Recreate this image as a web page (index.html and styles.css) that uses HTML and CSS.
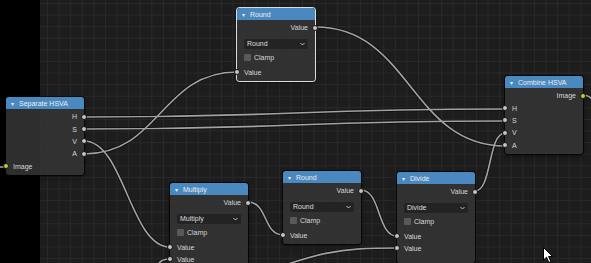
FILE: index.html
```html
<!DOCTYPE html>
<html lang="en">

<head>
    <meta charset="UTF-8">
    <meta name="viewport" content="width=device-width, initial-scale=1.0">
    <title>Node Editor</title>
    <link rel="stylesheet" href="styles.css">
</head>

<body>
    <main class="editor">
        <div class="strip"></div>
        <div class="grid"></div>

        <!-- links between sockets -->
        <svg class="wires" width="591" height="263" viewBox="0 0 591 263">
            <g class="shade">
                <path d="M84 117 C294 117 295 109 505 109" />
                <path d="M84 129 C294 129 295 121 505 121" />
                <path d="M84 141 C124 141 130 247 170 247" />
                <path d="M84 154 C160 154 161 72 237 72" />
                <path d="M316 27 C410 27 411 146 505 146" />
                <path d="M248 202 C268 202 263 235 283 235" />
                <path d="M361 190 C381 190 377 236 397 236" />
                <path d="M475 191 C492 191 488 133 505 133" />
                <path d="M230 285 C320 250 340 248 397 248" />
                <path d="M150 275 C160 262 160 259 170 259" />
                <path d="M0 167 L6 167" />
                <path d="M583 95 C596 95 596 112 600 118" />
            </g>
            <g class="wire">
                <path d="M84 117 C294 117 295 109 505 109" />
                <path d="M84 129 C294 129 295 121 505 121" />
                <path d="M84 141 C124 141 130 247 170 247" />
                <path d="M84 154 C160 154 161 72 237 72" />
                <path d="M316 27 C410 27 411 146 505 146" />
                <path d="M248 202 C268 202 263 235 283 235" />
                <path d="M361 190 C381 190 377 236 397 236" />
                <path d="M475 191 C492 191 488 133 505 133" />
                <path d="M230 285 C320 250 340 248 397 248" />
                <path d="M150 275 C160 262 160 259 170 259" />
                <path d="M0 167 L6 167" />
                <path d="M583 95 C596 95 596 112 600 118" />
            </g>
        </svg>

        <div class="node n-sep">
            <div class="head"><span class="tri">&#9662;</span>Separate HSVA</div>
            <div class="body">
                <div class="row out">H<i class="sock"></i></div>
                <div class="row out">S<i class="sock"></i></div>
                <div class="row out">V<i class="sock"></i></div>
                <div class="row out">A<i class="sock"></i></div>
                <div class="row in"><i class="sock yellow"></i>Image</div>
            </div>
        </div>

        <div class="node n-round selected">
            <div class="head"><span class="tri">&#9662;</span>Round</div>
            <div class="body">
                <div class="row out">Value<i class="sock"></i></div>
                <div class="opts">
                    <div class="select"><span>Round</span>
                        <svg class="chev" width="5" height="4" viewBox="0 0 5 4"><polyline points="0.5,1 2.5,3 4.5,1" /></svg>
                    </div>
                    <div class="check"><i class="box"></i>Clamp</div>
                </div>
                <div class="row in"><i class="sock"></i>Value</div>
            </div>
        </div>

        <div class="node n-comb">
            <div class="head"><span class="tri">&#9662;</span>Combine HSVA</div>
            <div class="body">
                <div class="row out">Image<i class="sock yellow"></i></div>
                <div class="row in"><i class="sock"></i>H</div>
                <div class="row in"><i class="sock"></i>S</div>
                <div class="row in"><i class="sock"></i>V</div>
                <div class="row in"><i class="sock"></i>A</div>
            </div>
        </div>

        <div class="node n-mult">
            <div class="head"><span class="tri">&#9662;</span>Multiply</div>
            <div class="body">
                <div class="row out">Value<i class="sock"></i></div>
                <div class="opts">
                    <div class="select"><span>Multiply</span>
                        <svg class="chev" width="5" height="4" viewBox="0 0 5 4"><polyline points="0.5,1 2.5,3 4.5,1" /></svg>
                    </div>
                    <div class="check"><i class="box"></i>Clamp</div>
                </div>
                <div class="row in"><i class="sock"></i>Value</div>
                <div class="row in"><i class="sock"></i>Value</div>
            </div>
        </div>

        <div class="node n-round2">
            <div class="head"><span class="tri">&#9662;</span>Round</div>
            <div class="body">
                <div class="row out">Value<i class="sock"></i></div>
                <div class="opts">
                    <div class="select"><span>Round</span>
                        <svg class="chev" width="5" height="4" viewBox="0 0 5 4"><polyline points="0.5,1 2.5,3 4.5,1" /></svg>
                    </div>
                    <div class="check"><i class="box"></i>Clamp</div>
                </div>
                <div class="row in"><i class="sock"></i>Value</div>
            </div>
        </div>

        <div class="node n-div">
            <div class="head"><span class="tri">&#9662;</span>Divide</div>
            <div class="body">
                <div class="row out">Value<i class="sock"></i></div>
                <div class="opts">
                    <div class="select"><span>Divide</span>
                        <svg class="chev" width="5" height="4" viewBox="0 0 5 4"><polyline points="0.5,1 2.5,3 4.5,1" /></svg>
                    </div>
                    <div class="check"><i class="box"></i>Clamp</div>
                </div>
                <div class="row in"><i class="sock"></i>Value</div>
                <div class="row in"><i class="sock"></i>Value</div>
            </div>
        </div>

        <svg class="cursor" width="11" height="17" viewBox="0 0 11 17">
            <polygon points="0.5,0.5 0.5,13 3.5,10.2 5.8,15.5 7.8,14.6 5.6,9.5 9.5,9.5" />
        </svg>
    </main>
</body>

</html>
```

FILE: styles.css
```css
html,
body {
    margin: 0;
    padding: 0;
    background: #000;
}

.editor {
    position: relative;
    width: 591px;
    height: 263px;
    display: flex;
    overflow: hidden;
    font-family: "Liberation Sans", Arial, sans-serif;
    font-size: 7px;
    color: #d6d6d6;
}

.strip {
    width: 40px;
    background: #000;
}

.grid {
    flex: 1;
    background-color: #1d1d1d;
    background-image:
        linear-gradient(to right, #292929 1px, transparent 1px),
        linear-gradient(to bottom, #292929 1px, transparent 1px);
    background-size: 11.6px 11.6px;
    background-position: 7px 3px;
}

.wires {
    position: absolute;
    left: 0;
    top: 0;
}

.wires path {
    fill: none;
}

.shade path {
    stroke: rgba(0, 0, 0, 0.55);
    stroke-width: 3.2;
}

.wire path {
    stroke: #a3a3a3;
    stroke-width: 1.6;
}

/* nodes */
.node {
    position: absolute;
    width: 78px;
    border-radius: 3px;
    background: rgba(52, 52, 52, 0.88);
    box-shadow: 0 0 0 1px rgba(0, 0, 0, 0.7), 0 2px 5px rgba(0, 0, 0, 0.55);
}

.node.selected {
    box-shadow: 0 0 0 1px #dcdcdc, 0 2px 5px rgba(0, 0, 0, 0.55);
}

.head {
    height: 12px;
    display: flex;
    align-items: center;
    padding-left: 5px;
    background: #4a89c0;
    border-radius: 3px 3px 0 0;
    color: #ececec;
}

.tri {
    font-size: 6px;
    width: 8px;
}

.body {
    padding: 1.5px 0 3px;
}

.row {
    position: relative;
    height: 12.4px;
    display: flex;
    align-items: center;
}

.row.out {
    justify-content: flex-end;
    padding-right: 7px;
}

.row.in {
    padding-left: 7px;
}

.sock {
    position: absolute;
    top: 50%;
    width: 4px;
    height: 4px;
    margin-top: -3px;
    border-radius: 50%;
    background: #c4c4c4;
    border: 1px solid #151515;
}

.out .sock {
    right: -3px;
}

.in .sock {
    left: -3px;
}

.sock.yellow {
    background: #c9c935;
}

.opts {
    padding: 5px 7px 2px;
}

.select {
    height: 10px;
    display: flex;
    align-items: center;
    justify-content: space-between;
    padding: 0 3px 0 3px;
    margin-bottom: 3px;
    background: #232323;
    border-radius: 2px;
    color: #dedede;
}

.chev polyline {
    fill: none;
    stroke: #cfcfcf;
    stroke-width: 0.9;
}

.check {
    height: 12px;
    display: flex;
    align-items: center;
    gap: 3px;
}

.box {
    width: 7px;
    height: 7px;
    border-radius: 1px;
    background: #595959;
}

.n-sep {
    left: 6px;
    top: 97px;
}

.n-round {
    left: 237px;
    top: 8px;
}

.n-comb {
    left: 505px;
    top: 76px;
}

.n-mult {
    left: 170px;
    top: 183px;
}

.n-round2 {
    left: 283px;
    top: 171px;
}

.n-div {
    left: 397px;
    top: 172px;
}

.n-div .body {
    padding-bottom: 8px;
}

.cursor {
    position: absolute;
    left: 543px;
    top: 247px;
}

.cursor polygon {
    fill: #fff;
    stroke: #000;
    stroke-width: 1;
}
```
